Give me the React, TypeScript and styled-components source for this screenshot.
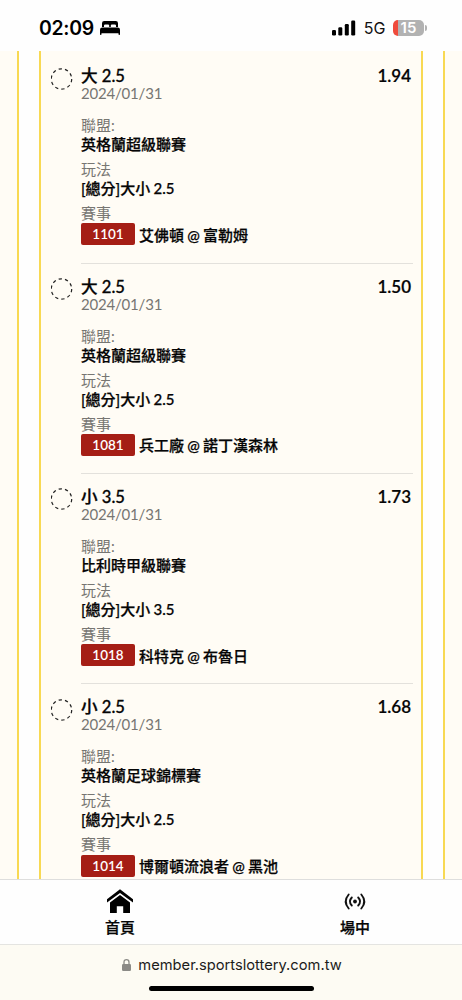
import React from 'react';
import styled, { createGlobalStyle } from 'styled-components';

const GlobalStyle = createGlobalStyle`
  * { box-sizing: border-box; }
  body { margin: 0; background: #fff; font-family: Lato, "Noto Sans CJK TC", sans-serif; color: #050505; }
`;

const Screen = styled.div`
  width: 462px;
  height: 1000px;
  display: flex;
  flex-direction: column;
  overflow: hidden;
  background: #fefefe;
`;

const StatusBar = styled.header`
  height: 51px;
  flex: none;
  display: flex;
  align-items: center;
  justify-content: space-between;
  padding: 4px 35px 0 39px;
`;

const StatusLeft = styled.div`
  display: flex;
  align-items: center;
  gap: 6px;
`;

const Clock = styled.span`
  font: 600 19.4px/24px Inter, sans-serif;
  letter-spacing: -0.3px;
  color: #000;
`;

const StatusRight = styled.div`
  display: flex;
  align-items: center;
`;

const Network = styled.span`
  font: 400 16px/20px Inter, sans-serif;
  color: #111;
  margin: 1px 7.5px 0 8px;
`;

const Battery = styled.div`
  width: 31px;
  height: 16px;
  border-radius: 5px;
  background: linear-gradient(90deg, #ef4b3c 5px, #b2b2b2 5px);
  color: #fff;
  font: 600 15px/16px Inter, sans-serif;
  text-align: center;
`;

const BatteryTip = styled.div`
  width: 2px;
  height: 6px;
  margin-left: 1px;
  border-radius: 0 2px 2px 0;
  background: #b2b2b2;
`;

const Page = styled.main`
  flex: none;
  height: 828px;
  display: flex;
  justify-content: space-between;
  overflow: hidden;
`;

const SideStrip = styled.div<{ $side: 'left' | 'right' }>`
  width: 19.3px;
  background: #fffcf5;
  ${({ $side }) => ($side === 'left' ? 'border-right' : 'border-left')}: 2px solid #f8d953;
`;

const Panel = styled.section`
  width: 384px;
  background: #fffcf5;
  border: solid #f8d953;
  border-width: 0 2px;
  padding: 2.3px 8px 0 10px;
`;

const Bet = styled.article`
  height: 210.35px;
  display: flex;
  padding-top: 12px;
`;

const Selector = styled.svg`
  flex: none;
  width: 22px;
  height: 22px;
  margin: 2.5px 8px 0 0;
`;

const Details = styled.div`
  flex: 1;
  border-bottom: 1px solid #e3e1dc;
`;

const Head = styled.div`
  display: flex;
  justify-content: space-between;
  padding-right: 2px;
  font-size: 17px;
  line-height: 22px;
`;

const Odds = styled.span`
  font-weight: 600;
  -webkit-text-stroke: 0.2px currentColor;
`;

const Pick = styled.span`
  font-size: 16.6px;
  font-weight: 500;
  -webkit-text-stroke: 0.3px currentColor;
`;

const DateLine = styled.div`
  font-size: 15px;
  line-height: 18px;
  letter-spacing: -0.2px;
  margin: -3px 0 14px;
  color: #777672;
`;

const Field = styled.div`
  margin-bottom: 6px;
  height: 38px;
`;

const Label = styled.div`
  font-size: 15px;
  line-height: 19px;
  font-weight: 400;
  color: #777672;
`;

const Value = styled.div`
  font-size: 15px;
  line-height: 19px;
  font-weight: 500;
  word-spacing: -0.6px;
  -webkit-text-stroke: 0.25px currentColor;
  white-space: nowrap;
`;

const Match = styled.div`
  display: flex;
  align-items: center;
  gap: 4px;
  height: 22px;
  margin-top: 0.2px;
  font-size: 15px;
  font-weight: 500;
  word-spacing: -0.6px;
  -webkit-text-stroke: 0.25px currentColor;
  white-space: nowrap;
`;

const Code = styled.span`
  width: 54px;
  height: 22px;
  border-radius: 2px;
  background: #a51e15;
  color: #fff;
  font-size: 13.5px;
  line-height: 23px;
  font-weight: 600;
  text-align: center;
  -webkit-text-stroke: 0;
`;

const TabBar = styled.nav`
  height: 65.5px;
  flex: none;
  display: flex;
  border-top: 1px solid #dededd;
  border-bottom: 1px solid #e4e4e1;
`;

const Tab = styled.div<{ $width: number }>`
  flex: none;
  width: ${({ $width }) => $width}px;
  display: flex;
  flex-direction: column;
  align-items: center;
  padding-top: 8px;
  font-size: 15px;
  line-height: 20px;
  font-weight: 500;
  -webkit-text-stroke: 0.25px currentColor;
`;

const TabIcon = styled.svg`
  display: block;
  width: 28px;
  height: 29px;
`;

const Browser = styled.footer`
  flex: 1;
  display: flex;
  flex-direction: column;
  align-items: center;
  background: #fdfbf3;
`;

const Address = styled.div`
  display: flex;
  align-items: center;
  gap: 7px;
  height: 22px;
  margin-top: 9px;
  padding-left: 2px;
  font: 400 14.7px/22px Inter, sans-serif;
  color: #1c1c1b;
`;

const HomeIndicator = styled.div`
  width: 165px;
  height: 5px;
  margin-top: 10px;
  border-radius: 3px;
  background: #000;
`;

const bets = [
  { pick: '大 2.5', odds: '1.94', league: '英格蘭超級聯賽', play: '[總分]大小 2.5', code: '1101', match: '艾佛頓 @ 富勒姆' },
  { pick: '大 2.5', odds: '1.50', league: '英格蘭超級聯賽', play: '[總分]大小 2.5', code: '1081', match: '兵工廠 @ 諾丁漢森林' },
  { pick: '小 3.5', odds: '1.73', league: '比利時甲級聯賽', play: '[總分]大小 3.5', code: '1018', match: '科特克 @ 布魯日' },
  { pick: '小 2.5', odds: '1.68', league: '英格蘭足球錦標賽', play: '[總分]大小 2.5', code: '1014', match: '博爾頓流浪者 @ 黑池' },
];

export default function App() {
  return (
    <Screen>
      <GlobalStyle />
      <StatusBar>
        <StatusLeft>
          <Clock>02:09</Clock>
          <svg width="20" height="14" viewBox="0 0 20 14">
            <path d="M2 6V2.2Q2 0 4.2 0H15.8Q18 0 18 2.2V6H16V4.6Q16 3.4 14.8 3.4H12Q10.8 3.4 10.8 4.6V6H9.2V4.6Q9.2 3.4 8 3.4H5.2Q4 3.4 4 4.6V6Z" />
            <path d="M0 8.8Q0 6.5 2.3 6.5H17.7Q20 6.5 20 8.8V13.2Q20 14 19.3 14Q18.6 14 18.5 13.2V12.3H1.5V13.2Q1.4 14 .7 14Q0 14 0 13.2Z" />
          </svg>
        </StatusLeft>
        <StatusRight>
          <svg width="24" height="16" viewBox="0 0 24 16">
            <rect x="0" y="10" width="4" height="5.5" rx="1.2" />
            <rect x="6.3" y="7.3" width="4" height="8.2" rx="1.2" />
            <rect x="12.8" y="4" width="4" height="11.5" rx="1.2" />
            <rect x="19.2" y="0.5" width="4" height="15" rx="1.2" />
          </svg>
          <Network>5G</Network>
          <Battery>15</Battery>
          <BatteryTip />
        </StatusRight>
      </StatusBar>
      <Page>
        <SideStrip $side="left" />
        <Panel>
          {bets.map((bet) => (
            <Bet key={bet.code}>
              <Selector viewBox="0 0 22 22">
                <circle cx="10.5" cy="11" r="10.2" fill="none" stroke="#222" strokeWidth="1.2" strokeDasharray="3.3 3.11" />
              </Selector>
              <Details>
                <Head>
                  <Pick>{bet.pick}</Pick>
                  <Odds>{bet.odds}</Odds>
                </Head>
                <DateLine>2024/01/31</DateLine>
                <Field>
                  <Label>聯盟:</Label>
                  <Value>{bet.league}</Value>
                </Field>
                <Field>
                  <Label>玩法</Label>
                  <Value>{bet.play}</Value>
                </Field>
                <Label>賽事</Label>
                <Match>
                  <Code>{bet.code}</Code>
                  {bet.match}
                </Match>
              </Details>
            </Bet>
          ))}
        </Panel>
        <SideStrip $side="right" />
      </Page>
      <TabBar>
        <Tab $width={240}>
          <TabIcon viewBox="0 0 28 29">
            <path d="M14 1.3L27 11.2V14.6L14 5L1 14.6V11.2Z" />
            <path d="M14 7L24 14.6V25H17.2V18.2H10.8V25H4V14.6Z" />
          </TabIcon>
          首頁
        </Tab>
        <Tab $width={230}>
          <TabIcon viewBox="0 0 28 29" fill="none" stroke="#111" strokeWidth="1.9" strokeLinecap="round">
            <path d="M7.7 6.5Q1.7 13.5 7.7 20.5M10.8 9.5Q7 13.5 10.8 17.5M17.2 9.5Q21 13.5 17.2 17.5M20.3 6.5Q26.3 13.5 20.3 20.5" />
            <circle cx="14" cy="13.5" r="1.9" fill="#111" stroke="none" />
          </TabIcon>
          場中
        </Tab>
      </TabBar>
      <Browser>
        <Address>
          <svg width="9" height="12" viewBox="0 0 9 12">
            <rect y="5" width="9" height="7" rx="1.2" fill="#8b8a86" />
            <path d="M2 5.5V3.2Q2 .7 4.5 .7T7 3.2V5.5" fill="none" stroke="#8b8a86" strokeWidth="1.3" />
          </svg>
          member.sportslottery.com.tw
        </Address>
        <HomeIndicator />
      </Browser>
    </Screen>
  );
}
